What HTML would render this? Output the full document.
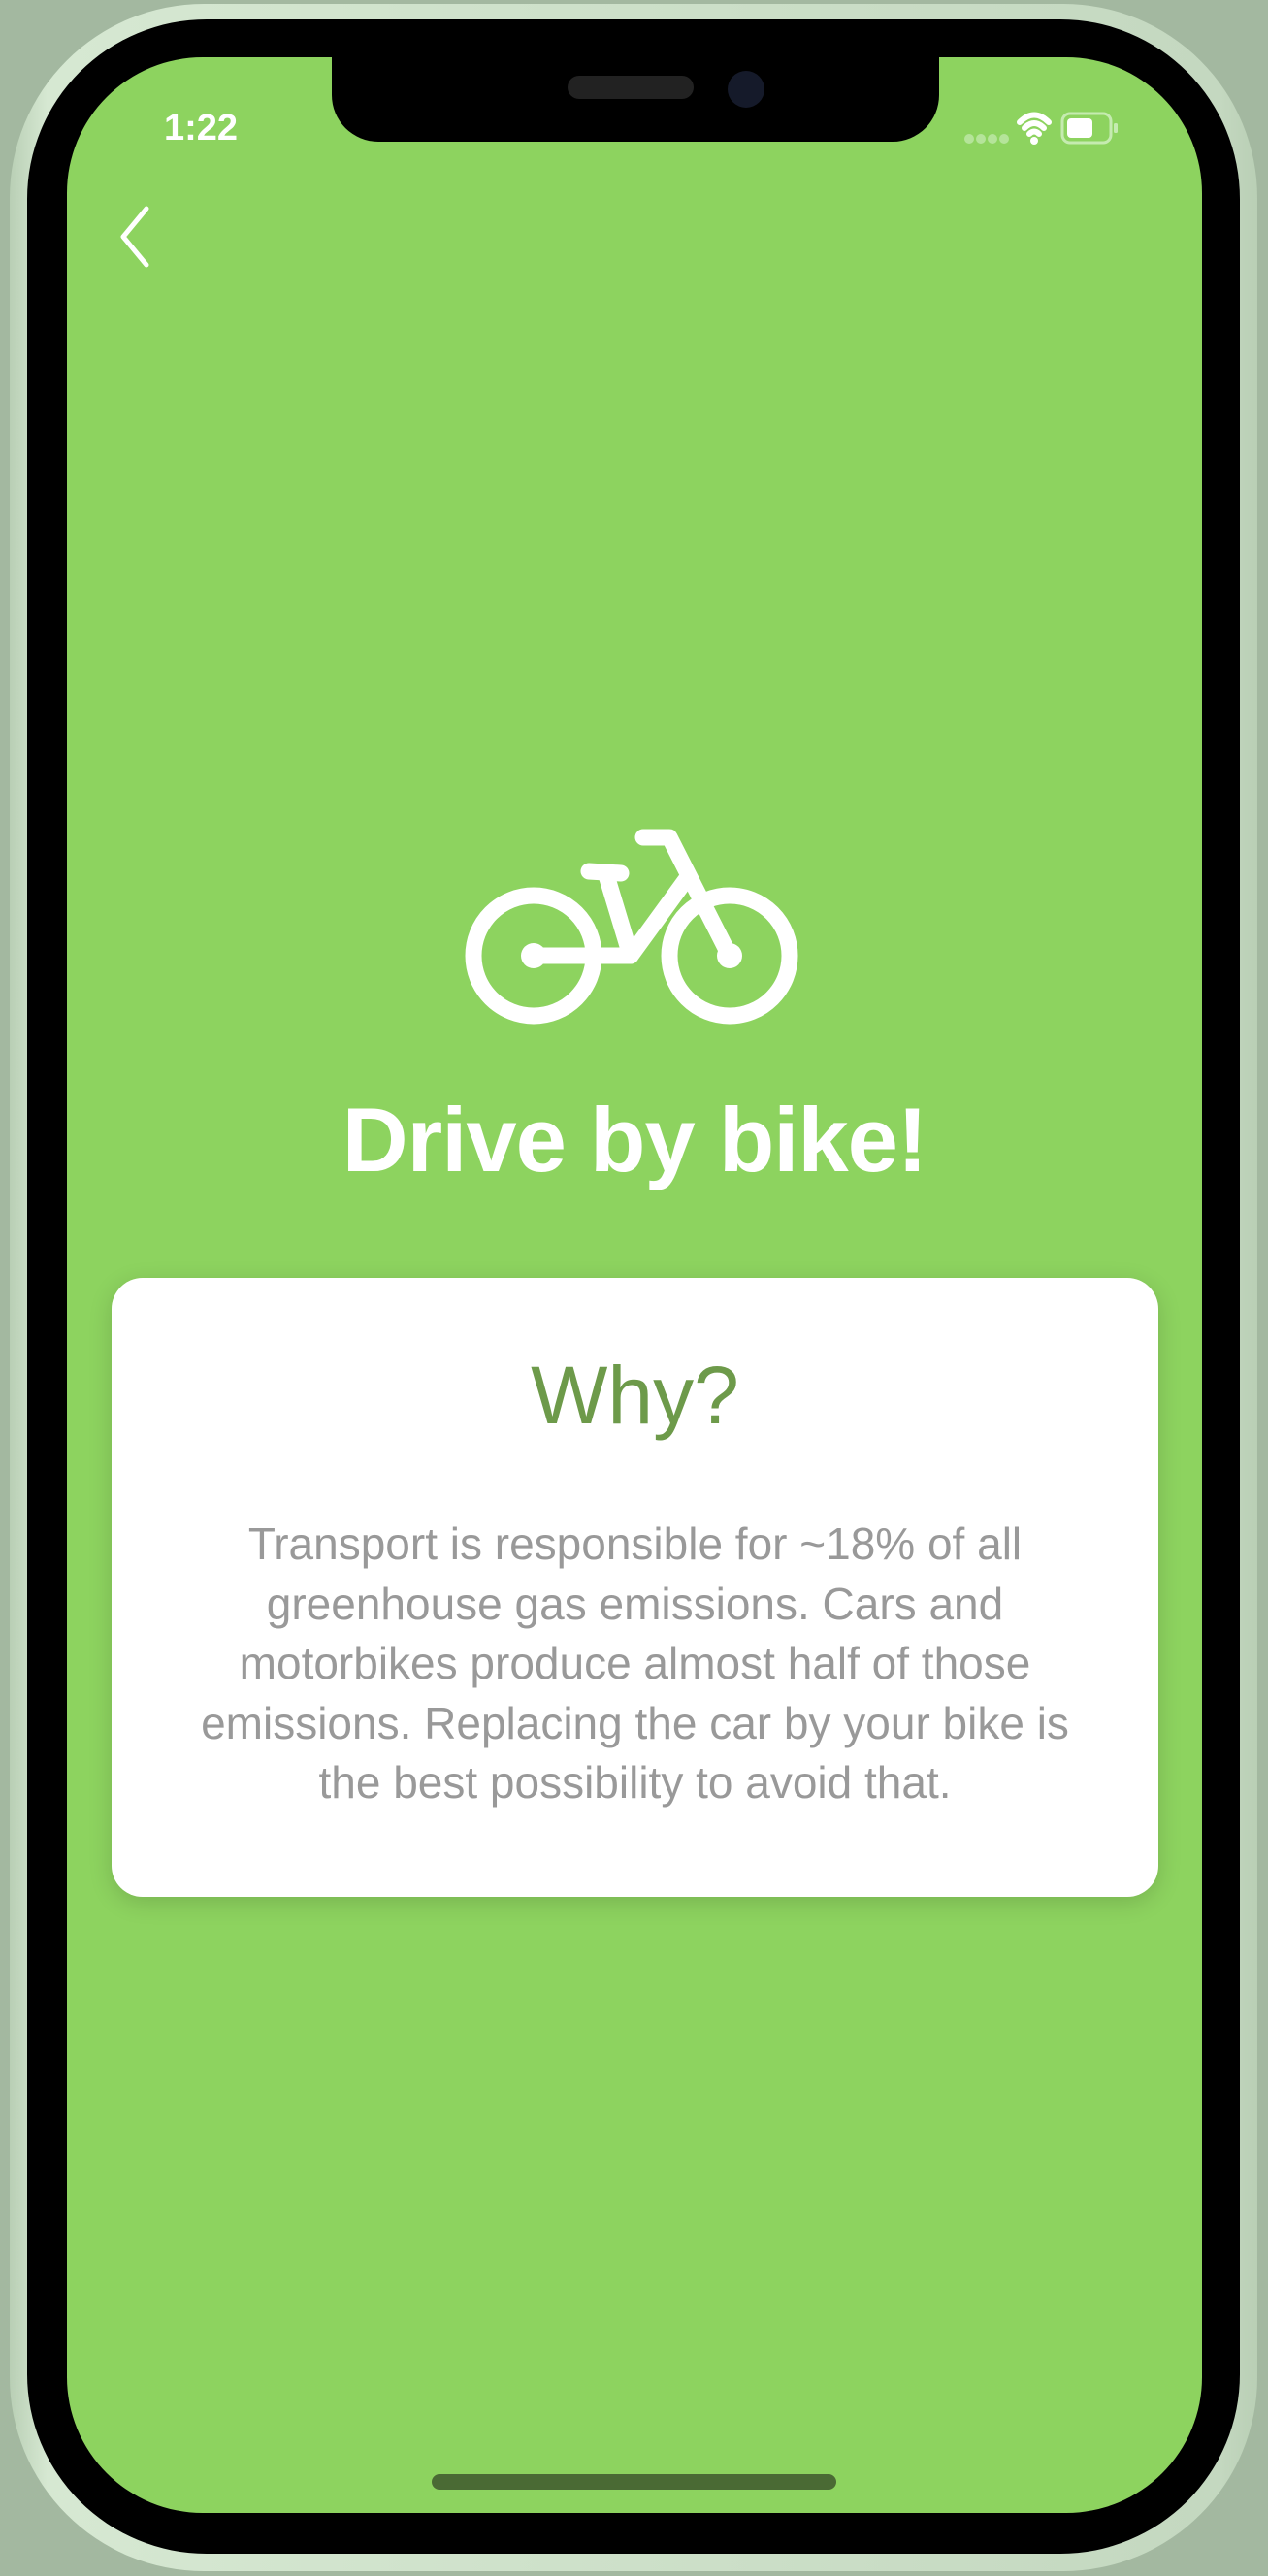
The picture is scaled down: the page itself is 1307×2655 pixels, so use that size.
<!DOCTYPE html>
<html><head><meta charset="utf-8"><style>
html,body{margin:0;padding:0}
body{width:1307px;height:2655px;background:#a3b8a0;position:relative;overflow:hidden;font-family:"Liberation Sans",sans-serif}
.frame{position:absolute;left:10px;top:4px;width:1286px;height:2646px;border-radius:200px;background:linear-gradient(90deg,#b9cfb5,#d6e8d2 3%,#c4d8c0 97%,#b9cfb5);}
.bezel{position:absolute;left:28px;top:20px;width:1250px;height:2612px;border-radius:185px;background:#000}
.screen{position:absolute;left:69px;top:59px;width:1170px;height:2531px;border-radius:140px;background:#8dd35f;overflow:hidden}
.notch{position:absolute;left:273px;top:-10px;width:626px;height:97px;background:#000;border-radius:0 0 48px 48px}
.spk{position:absolute;left:585px;top:78px;width:130px;height:24px;border-radius:12px;background:#222}
.cam{position:absolute;left:750px;top:73px;width:38px;height:38px;border-radius:50%;background:#151a2a}
.time{position:absolute;left:100px;top:52px;color:#fff;font-size:38px;font-weight:bold}
.card{position:absolute;left:46px;top:1258px;width:1079px;height:638px;border-radius:32px;background:#fff;box-shadow:0 6px 24px rgba(0,0,0,.15);text-align:center}
.card h2{margin:0;padding-top:76px;font-size:84px;font-weight:normal;color:#6d9a4a;line-height:90px}
.card p{margin:78px auto 0;width:930px;font-size:46px;line-height:61.5px;color:#999}
.title{position:absolute;left:0;width:1170px;top:1062px;text-align:center;color:#fff;font-size:94px;font-weight:bold;letter-spacing:-1px}
.home{position:absolute;left:376px;top:2491px;width:417px;height:16px;border-radius:8px;background:#4a6a34}
</style></head><body>
<div class="frame"></div>
<div class="bezel"></div>
<div class="screen">
  <div class="notch"></div>
  <div class="time">1:22</div>
  <svg style="position:absolute;left:920px;top:48px" width="200" height="50" viewBox="0 0 200 50">
    <g fill="#b5e49a"><circle cx="10" cy="36" r="5"/><circle cx="22" cy="36" r="5"/><circle cx="34" cy="36" r="5"/><circle cx="46" cy="36" r="5"/></g>
    <path d="M62 19 Q77 4 92 19 M67 25 Q77 15 87 25 M72 31 Q77 26 82 31" stroke="#fff" stroke-width="6" fill="none" stroke-linecap="round"/>
    <circle cx="77" cy="38" r="4" fill="#fff"/>
    <rect x="106" y="10" width="50" height="30" rx="8" fill="none" stroke="#c5ebb0" stroke-width="3"/>
    <rect x="111" y="15" width="26" height="20" rx="4" fill="#fff"/>
    <rect x="159" y="20" width="4" height="10" rx="1.5" fill="#c5ebb0"/>
  </svg>
  <svg style="position:absolute;left:50px;top:150px" width="40" height="70" viewBox="0 0 40 70"><path d="M32 6 L8 35 L32 64" stroke="#fff" stroke-width="5" fill="none" stroke-linecap="round" stroke-linejoin="round"/></svg>
  <svg style="position:absolute;left:0;top:0" width="1170" height="1100" viewBox="69 59 1170 1100">
    <g stroke="#fff" stroke-width="17" fill="none" stroke-linecap="round" stroke-linejoin="round">
      <circle cx="550" cy="985" r="62"/>
      <circle cx="752" cy="985" r="62"/>
      <path d="M663 863 L690 863 L752 985"/>
      <path d="M550 985 L650 985 L706 908"/>
      <path d="M625 902 L650 985"/>
      <path d="M607 898 L640 900"/>
    </g>
    <circle cx="550" cy="985" r="13" fill="#fff"/>
    <circle cx="752" cy="985" r="13" fill="#fff"/>
  </svg>
  <div class="title">Drive by bike!</div>
  <div class="card"><h2>Why?</h2><p>Transport is responsible for ~18% of all greenhouse gas emissions. Cars and motorbikes produce almost half of those emissions. Replacing the car by your bike is the best possibility to avoid that.</p></div>
  <div class="home"></div>
</div>
<div class="spk"></div><div class="cam"></div>
</body></html>
